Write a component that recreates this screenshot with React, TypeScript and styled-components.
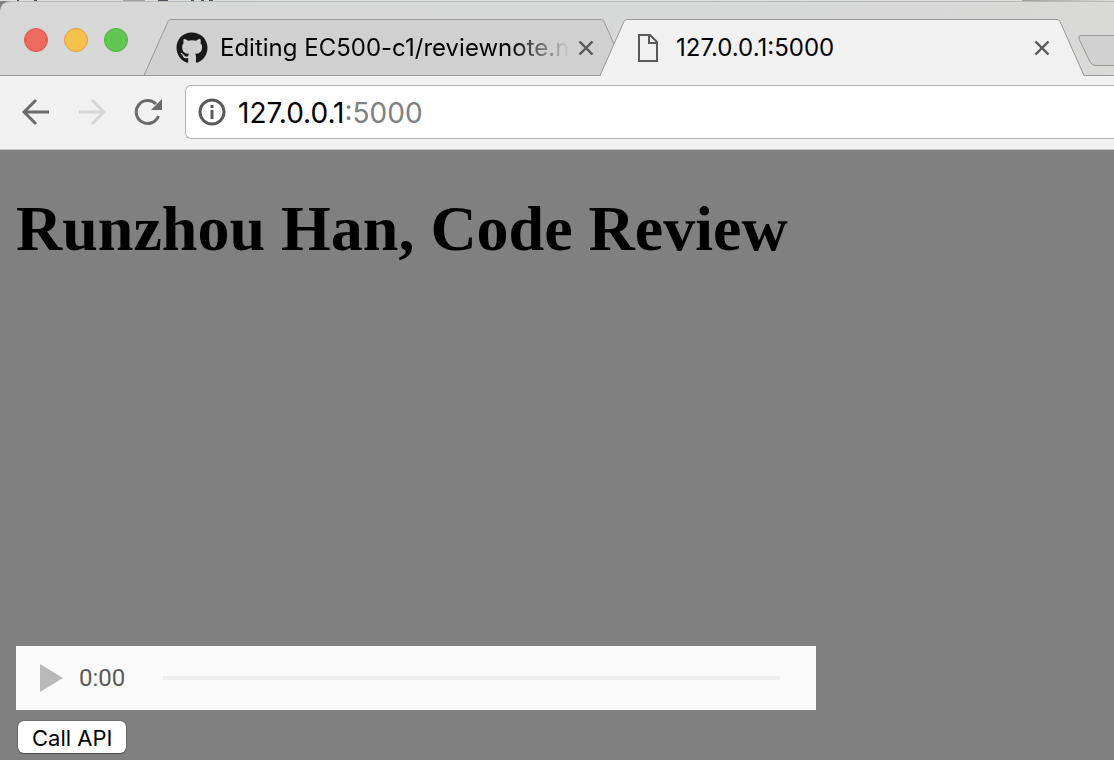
import React from "react";
import styled, { createGlobalStyle } from "styled-components";
import { FaGithub } from "react-icons/fa";

const GlobalStyle = createGlobalStyle`
  *, *::before, *::after { box-sizing: border-box; }
  html, body, #root { margin: 0; min-height: 100vh; }
  #root { display: flex; }
  button, input { font: inherit; margin: 0; padding: 0; border: 0; background: none; }
`;

const Desktop = styled.div`
  flex: 1;
  min-width: 0;
  display: flex;
  flex-direction: column;
  overflow: hidden;
  background: #808080;
  font-family: Inter, "Liberation Sans", sans-serif;
  color: #000;
`;

const WindowBehind = styled.div`
  display: flex;
  height: 1px;
  overflow: hidden;
  background: linear-gradient(90deg, #dcdfdf 0 1022px, #9c9c98 1022px, #dcdfdb);
`;

const BrowserWindow = styled.div`
  flex: 1;
  display: flex;
  flex-direction: column;
`;

const TabStrip = styled.header`
  display: flex;
  align-items: flex-end;
  height: 75px;
  padding-left: 24px;
  border-top: 1px solid #b9bbba;
  border-radius: 10px 0 0 0;
  background: linear-gradient(90deg, #d7d7d7, #d7d8d8 70%, #d9d9d7);
  box-shadow: inset 0 -1px 0 #999;
`;

const TrafficLights = styled.div`
  display: flex;
  flex: none;
  gap: 16px;
  width: 120px;
  padding-bottom: 24px;
`;

const Light = styled.button<{ $fill: string; $edge: string }>`
  width: 24px;
  height: 24px;
  border: 1px solid ${(p) => p.$edge};
  border-radius: 50%;
  background: ${(p) => p.$fill};
`;

const Tabs = styled.div`
  display: flex;
  flex: none;
`;

const TabShell = styled.div<{ $active?: boolean }>`
  position: relative;
  z-index: ${(p) => (p.$active ? 1 : 0)};
  display: flex;
  width: 484px;
  height: 57px;
  margin-right: -28px;
  color: ${(p) => (p.$active ? "#f1f1f1" : "#d0d0d0")};
`;

const TabBody = styled.div<{ $active?: boolean }>`
  flex: 1;
  min-width: 0;
  display: flex;
  align-items: center;
  padding: 0 6px 0 4px;
  border-top: 1px solid #999;
  border-bottom: 1px solid ${(p) => (p.$active ? "#f1f1f1" : "#999")};
  background: currentColor;
`;

const TabIcon = styled.span`
  display: flex;
  justify-content: center;
  flex: none;
  width: 32px;
  margin-right: 12px;
  color: #1b1817;
`;

const TabTitle = styled.button<{ $fade?: boolean }>`
  flex: 1;
  overflow: hidden;
  margin-right: 8px;
  white-space: nowrap;
  text-align: left;
  font-size: 24px;
  line-height: 32px;
  color: #000;
  mask-image: ${(p) => (p.$fade ? "linear-gradient(90deg, #000 calc(100% - 60px), transparent)" : "none")};
`;

const CloseButton = styled.button`
  display: flex;
  flex: none;
  color: #58585a;
`;

const NewTabButton = styled.button`
  display: flex;
  flex: none;
  margin: 0 0 9px 22px;
`;

const Toolbar = styled.nav`
  display: flex;
  align-items: center;
  height: 74px;
  padding: 0 0 2px 20px;
  border-bottom: 1px solid #c8c8c8;
  background: #f1f1f1;
`;

const NavButton = styled.button`
  display: flex;
  justify-content: center;
  flex: none;
  width: 32px;
  margin-right: 24px;
  color: #6a6a6a;
  &:disabled { color: #d6d6d6; }
`;

const AddressBar = styled.div`
  flex: 1;
  display: flex;
  align-items: center;
  gap: 12px;
  height: 54px;
  margin-left: -3px;
  padding-left: 12px;
  border: 1px solid #b4b4b4;
  border-right: 0;
  border-radius: 6px 0 0 6px;
  background: #fff;
`;

const Address = styled.a`
  padding-top: 2px;
  font-size: 28px;
  line-height: 36px;
  color: #000;
  text-decoration: none;
  span { color: #808080; }
`;

const Page = styled.main`
  flex: 1;
  display: flex;
  flex-direction: column;
  align-items: flex-start;
  padding: 0 16px 6px;
  background: #808080;
`;

const Heading = styled.h1`
  margin: 42px 0 380px;
  font-family: "Liberation Serif", "Times New Roman", serif;
  font-size: 64px;
  line-height: 74px;
  font-weight: 700;
`;

const Player = styled.section`
  display: flex;
  align-items: center;
  width: 800px;
  max-width: 100%;
  height: 64px;
  padding: 0 36px 0 24px;
  background: #fafafa;
`;

const PlayButton = styled.button`
  display: flex;
  margin-right: 16px;
  color: #b9b9b9;
`;

const Time = styled.span`
  width: 84px;
  font-family: Roboto, sans-serif;
  font-size: 24px;
  line-height: 32px;
  color: #5a5a5a;
`;

const Seek = styled.input`
  flex: 1;
  min-width: 0;
  height: 4px;
  appearance: none;
  background: #ededed;
  &::-webkit-slider-thumb { appearance: none; width: 0; height: 0; }
`;

const CallButton = styled.button`
  height: 32px;
  margin: 11px 0 0 2px;
  padding: 2px 14px 0;
  border-radius: 6px;
  background: #fff;
  box-shadow: 0 0 1px 1px rgba(0, 0, 0, 0.15), 0 1px 1px rgba(0, 0, 0, 0.3);
  font-size: 22px;
  line-height: 30px;
  color: #000;
`;

const LeftEdge = ({ active }: { active?: boolean }) => (
  <svg width="28" height="57" aria-hidden="true">
    <path d="M0 57 L24 2.5 Q25 .5 27 .5 H28 V57Z" fill="currentColor" />
    <path d="M0 56.5 L24 2.5 Q25 .5 27 .5 H28" fill="none" stroke="#999" />
    {!active && <path d="M0 56.5H28" stroke="#999" />}
  </svg>
);

const RightEdge = ({ active }: { active?: boolean }) => (
  <svg width="28" height="57" aria-hidden="true">
    <path d="M28 57 L4 2.5 Q3 .5 1 .5 H0 V57Z" fill="currentColor" />
    <path d="M28 56.5 L4 2.5 Q3 .5 1 .5 H0" fill="none" stroke="#999" />
    {!active && <path d="M0 56.5H28" stroke="#999" />}
  </svg>
);

const PageIcon = () => (
  <svg width="20" height="28" fill="none" stroke="#5a5a5a" strokeWidth="2" aria-hidden="true">
    <path d="M1 1H12L19 8V27H1Z" />
    <path d="M11 1V9H19" />
  </svg>
);

interface TabProps {
  title: string;
  icon: React.ReactNode;
  active?: boolean;
  fade?: boolean;
}

const Tab = ({ title, icon, active, fade }: TabProps) => (
  <TabShell $active={active}>
    <LeftEdge active={active} />
    <TabBody $active={active}>
      <TabIcon>{icon}</TabIcon>
      <TabTitle $fade={fade}>{title}</TabTitle>
      <CloseButton aria-label={`Close ${title}`}>
        <svg width="16" height="16" stroke="currentColor" strokeWidth="2.4" aria-hidden="true">
          <path d="M1.5 1.5 14.5 14.5M14.5 1.5 1.5 14.5" />
        </svg>
      </CloseButton>
    </TabBody>
    <RightEdge active={active} />
  </TabShell>
);

export default function App() {
  return (
    <Desktop>
      <GlobalStyle />
      <WindowBehind>
        <svg width="220" height="1" aria-hidden="true">
          <path d="M17 .5H19M34 .5H37M158 .5H168M191 .5H194M201 .5H204M209 .5H213" stroke="#4b5158" />
          <path d="M123 .5H145" stroke="#a0a0a0" />
        </svg>
      </WindowBehind>
      <BrowserWindow>
        <TabStrip>
          <TrafficLights>
            <Light aria-label="Close window" $fill="#ee6b60" $edge="#d9574d" />
            <Light aria-label="Minimize window" $fill="#f6c04f" $edge="#dba43b" />
            <Light aria-label="Zoom window" $fill="#62c655" $edge="#4eae3d" />
          </TrafficLights>
          <Tabs>
            <Tab title="Editing EC500-c1/reviewnote.n" icon={<FaGithub size={32} />} fade />
            <Tab title="127.0.0.1:5000" icon={<PageIcon />} active />
          </Tabs>
          <NewTabButton aria-label="New tab">
            <svg width="64" height="32" aria-hidden="true">
              <path d="M3 .5H50Q53 .5 54 3L63 28Q64 30.500 61 30.500H18Q14 30.500 12 27L1 4Q0 .5 3 .5Z" fill="#d0d0d0" stroke="#999" />
            </svg>
          </NewTabButton>
        </TabStrip>
        <Toolbar>
          <NavButton aria-label="Back">
            <svg width="28" height="28" fill="none" stroke="currentColor" strokeWidth="3" aria-hidden="true">
              <path d="M27 14H3M14 2 2 14 14 26" />
            </svg>
          </NavButton>
          <NavButton aria-label="Forward" disabled>
            <svg width="28" height="28" fill="none" stroke="currentColor" strokeWidth="3" aria-hidden="true">
              <path d="M1 14H25M14 2 26 14 14 26" />
            </svg>
          </NavButton>
          <NavButton aria-label="Reload">
            <svg width="28" height="28" fill="none" aria-hidden="true">
              <path d="M24.500 18A11.500 11.500 0 1 1 22 6" stroke="currentColor" strokeWidth="3" />
              <path d="M28 1V12H17Z" fill="currentColor" />
            </svg>
          </NavButton>
          <AddressBar>
            <svg width="28" height="28" fill="none" aria-hidden="true">
              <circle cx="14" cy="14" r="12" stroke="#5a5a5a" strokeWidth="3" />
              <path d="M14 7V10M14 12V21" stroke="#5a5a5a" strokeWidth="3" />
            </svg>
            <Address href="http://127.0.0.1:5000">127.0.0.1<span>:5000</span></Address>
          </AddressBar>
        </Toolbar>
        <Page>
          <Heading>Runzhou Han, Code Review</Heading>
          <Player aria-label="Audio player">
            <PlayButton aria-label="Play">
              <svg width="23" height="28" aria-hidden="true">
                <path d="M0 0 23 14 0 28Z" fill="currentColor" />
              </svg>
            </PlayButton>
            <Time>0:00</Time>
            <Seek type="range" aria-label="Seek" defaultValue={0} />
          </Player>
          <CallButton>Call API</CallButton>
        </Page>
      </BrowserWindow>
    </Desktop>
  );
}
